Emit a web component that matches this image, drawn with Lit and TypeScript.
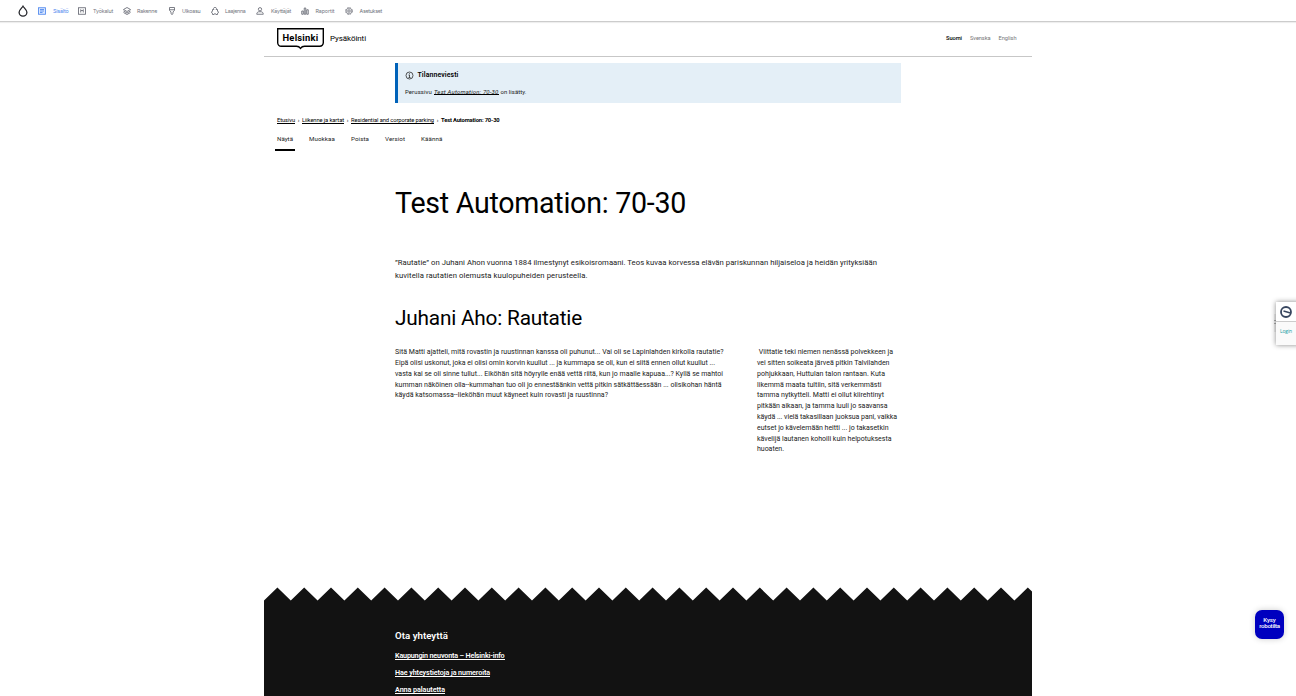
import { LitElement, html, svg, css } from "lit";
import { customElement, property } from "lit/decorators.js";

/** A single line of text tracked so that it fills exactly `w` pixels. */
@customElement("fit-text")
class FitText extends LitElement {
  @property({ type: Number }) w = 0;
  @property() text = "";
  static styles = css`
    :host { display: inline-block; white-space: pre; vertical-align: top; }
    span { display: inline-block; text-decoration: inherit; }
  `;
  render() {
    return html`<span>${this.text}</span>`;
  }
  updated() {
    const s = this.renderRoot.querySelector("span") as HTMLElement;
    s.style.letterSpacing = "0";
    const natural = s.getBoundingClientRect().width;
    s.style.letterSpacing = `${(this.w - natural) / this.text.length}px`;
    this.style.width = `${this.w}px`;
  }
}

const fit = (text: string, w: number) => html`<fit-text .text=${text} .w=${w}></fit-text>`;

const tools = [
  { label: "Sisältö", w: 15.5, item: 40, pad: 15, icon: svg`<rect x="1" y="1.500" width="14" height="13" fill="#dbe8ff"/><path d="M4 5h8M4 8h8M4 11h5"/>` },
  { label: "Työkalut", w: 20, item: 45, pad: 15, icon: svg`<rect x="1" y="1.500" width="14" height="13"/><path d="M5.500 5v6M10.500 5v6M5.500 5.500L8 8l2.500-2.500"/>` },
  { label: "Rakenne", w: 20, item: 45, pad: 14, icon: svg`<path d="M8 1l7 4-7 4-7-4zM1 8l7 4 7-4M1 11l7 4 7-4"/>` },
  { label: "Ulkoasu", w: 18.5, item: 43, pad: 14, icon: svg`<path d="M3 1h10v5.500L10 10v3.500l-2 1.500-2-1.500V10L3 6.500zM3 5.500h10"/>` },
  { label: "Laajenna", w: 20.5, item: 45, pad: 14, icon: svg`<path d="M3 5h2.800a2.800 2.800 0 114.400 0H13v3.500a2 2 0 010 4V15H9.800a1.800 1.800 0 00-3.600 0H3v-2.500a2 2 0 010-4z"/>` },
  { label: "Käyttäjät", w: 20, item: 45, pad: 15, icon: svg`<circle cx="8" cy="4.500" r="3.300"/><path d="M1.500 14.500c0-3 2-5 4-5h5c2 0 4 2 4 5z"/>` },
  { label: "Raportit", w: 19, item: 44, pad: 14.5, icon: svg`<path d="M1.500 8h3v6.500h-3zM6.500 2h3v12.500h-3zM11.500 5.500h3v9h-3z"/>` },
  { label: "Asetukset", w: 22.5, item: 44, pad: 14.5, icon: svg`<circle cx="8" cy="8" r="6.600" stroke-dasharray="3.700 1.500"/><circle cx="8" cy="8" r="5.500" stroke-width="1"/><circle cx="8" cy="8" r="2.500"/>` },
];

const left: [string, number][] = [
  ["Sitä Matti ajatteli, mitä rovastin ja ruustinnan kanssa oli puhunut... Vai oli se Lapinlahden kirkolla rautatie?", 328.5],
  ["Eipä olisi uskonut, joka ei olisi omin korvin kuullut ... ja kummapa se oli, kun ei siitä ennen ollut kuullut ...", 320],
  ["vasta kai se oli sinne tullut... Eiköhän sitä höyrylle enää vettä riitä, kun jo maalle kapuaa...? Kyllä se mahtoi", 328],
  ["kumman näköinen olla--kummahan tuo oli jo ennestäänkin vettä pitkin sätkättäessään ... olisikohan häntä", 326.5],
  ["käydä katsomassa--lieköhän muut käyneet kuin rovasti ja ruustinna?", 213],
];

const right: [string, number][] = [
  [" Viittatie teki niemen nenässä polvekkeen ja", 136],
  ["vei sitten soikeata järveä pitkin Talvilahden", 132.5],
  ["pohjukkaan, Huttulan talon rantaan. Kuta", 128],
  ["likemmä maata tultiin, sitä verkemmästi", 124.5],
  ["tamma nytkytteli. Matti ei ollut kiirehtinyt", 127],
  ["pitkään aikaan, ja tamma luuli jo saavansa", 130.5],
  ["käydä ... vielä takasillaan juoksua pani, vaikka", 140],
  ["eutset jo kävelemään heitti ... jo takasetkin", 131.5],
  ["kävelijä lautanen kohoili kuin helpotuksesta", 134.5],
  ["huoaten.", 27],
];

const footerLinks: [string, number][] = [
  ["Kaupungin neuvonta – Helsinki-info", 109.5],
  ["Hae yhteystietoja ja numeroita", 95],
  ["Anna palautetta", 50],
];

const zigzag = () => {
  const step = 26.8;
  let d = "M0 14";
  for (let x = 0; x < 800; x += step) d += `L${x} 13.500L${x + step / 2} 0.500`;
  return d + "L800 14z";
};

@customElement("app-root")
class AppRoot extends LitElement {
  static styles = css`
    :host {
      display: block; position: relative; width: 1296px; height: 696px; overflow: hidden;
      background: #fff; color: #000; font-family: Roboto, "Liberation Sans", sans-serif;
    }
    * { box-sizing: border-box; }
    h1, h2, h3, p { margin: 0; font-weight: 400; }
    .toolbar {
      display: flex; height: 22px; padding: 0 0 0 18px; align-items: center;
      border-bottom: 1px solid #ccc; box-shadow: 0 1px 1px #0001; font: 5.3px/22px Inter, sans-serif; color: #73757e;
    }
    .drop { width: 20px; height: 12px; flex: none; }
    .drop svg { display: block; width: 10px; height: 12px; }
    .tool { display: flex; align-items: center; flex: none; height: 22px; }
    .tool svg { width: 8px; height: 8px; fill: none; stroke: #666872; stroke-width: 1.7; }
    .tool.on { color: #4d86ee; }
    .tool.on svg { stroke: #4d86ee; }
    .iconbox { display: flex; flex: none; }
    .page { width: 768px; margin: 0 auto; }
    header { display: flex; height: 35px; border-bottom: 1px solid #c7c7c7; padding: 5px 15.5px 0 12px; }
    .logo { position: relative; width: 49px; height: 24px; flex: none; }
    .logo svg { position: absolute; inset: 0; }
    .logo b { position: absolute; left: 6.5px; top: 5px; font-size: 9.4px; line-height: 12px; font-weight: 700; }
    .site { padding-left: 5px; font-size: 8px; line-height: 23px; flex: 1; }
    .langs { display: flex; gap: 8px; font-size: 5.7px; line-height: 22px; color: #777; }
    .langs .cur { color: #000; font-weight: 500; }
    .notice { width: 506px; height: 40px; margin: 6px 0 0 131px; background: #e4eff7; border-left: 3px solid #0062b9; padding: 6px 0 0 7px; }
    .ntitle { display: flex; align-items: center; gap: 3.5px; height: 12px; font-size: 6.9px; line-height: 12px; font-weight: 600; }
    .ntitle svg { width: 9px; height: 9px; }
    .nbody { display: flex; gap: 2px; margin-top: 5px; font-size: 6px; line-height: 11px; color: #222; }
    .nbody i { border-bottom: 1px solid #000; height: 9px; }
    .crumbs { display: flex; margin: 12px 0 0 13px; font-size: 5.8px; line-height: 10px; height: 10px; }
    .crumbs a { border-bottom: 1px solid #000; height: 9px; }
    .crumbs em { width: 7px; text-align: center; font-style: normal; }
    .crumbs b { font-weight: 700; }
    .tabs { display: flex; margin: 9px 0 0 11px; font-size: 6.2px; line-height: 10px; height: 17px; color: #222; }
    .tab { padding: 0 2px; height: 17px; }
    .tab.gap { margin-left: 12px; }
    .tab.on { border-bottom: 2px solid #000; }
    .content { margin-left: 131px; width: 506px; }
    h1 { padding-top: 34px; font-size: 28.6px; line-height: 37px; height: 105px; }
    .lead { font-size: 7.7px; line-height: 13px; height: 26px; color: #1a1a1a; }
    .lead fit-text, .cols fit-text { display: block; }
    h2 { margin-top: 23px; font-size: 20.8px; line-height: 26px; height: 42.2px; }
    .cols { display: grid; grid-template-columns: 362px 1fr; font-size: 7px; line-height: 10.8px; height: 239.8px; color: #1a1a1a; }
    .zig { display: block; width: 768px; height: 14px; }
    footer { background: #121212; color: #fff; height: 96px; padding: 27px 0 0 131px; display: flex; flex-direction: column; align-items: flex-start; }
    footer h3 { font-size: 9.7px; line-height: 16px; font-weight: 600; margin-bottom: 7px; }
    footer a { font-size: 7.2px; line-height: 9px; height: 9px; margin-bottom: 8px; font-weight: 600; border-bottom: 1px solid #fff; }
    .login {
      position: absolute; left: 1276px; top: 302px; width: 24px; height: 43px; background: #fafafa;
      box-shadow: 0 0 5px #0007; font: 5px/18px "Open Sans", sans-serif; color: #169aa3;
    }
    .login .mark { height: 20px; border-bottom: 1px solid #ccc; padding: 4px 0 0 4px; background: #fff; }
    .login svg { display: block; }
    .login .label { padding-left: 4px; }
    .grip { position: absolute; left: 1274px; top: 314px; width: 2px; height: 18px; background: #eee; }
    .grip::after { content: ""; position: absolute; left: 0; top: 6px; width: 2px; height: 6px; background: repeating-linear-gradient(#aaa 0 1px, #eee 1px 3px); }
    .bot {
      position: absolute; left: 1255px; top: 610px; width: 29px; height: 29px; border-radius: 7px; background: #0000bf;
      box-shadow: 0 0 6px #0003; color: #fff; font-size: 6.1px; line-height: 6px; font-weight: 500;
      display: flex; flex-direction: column; align-items: center; padding-top: 7px;
    }
  `;

  render() {
    return html`
      <nav class="toolbar">
        <div class="drop"><svg viewBox="0 0 10 12"><path d="M5 1.200C4 3 1.100 5 1.100 7.300a3.900 3.900 0 007.800 0C8.900 5 6 3 5 1.200z" fill="none" stroke="#232429" stroke-width="1.300"/></svg></div>
        ${tools.map((t, i) => html`<div class="tool ${i ? "" : "on"}" style="width:${t.item}px">
          <span class="iconbox" style="width:${t.pad}px"><svg viewBox="0 0 16 16">${t.icon}</svg></span>${fit(t.label, t.w)}
        </div>`)}
      </nav>
      <div class="page">
        <header>
          <div class="logo">
            <svg width="49" height="24" viewBox="0 0 49 24"><path d="M1.700 1.700h45.600v14.100a3.500 3.500 0 01-3.500 3.500H28.500q-2.500 0-4 2-1.500-2-4-2H5.200a3.500 3.500 0 01-3.500-3.500z" fill="#fff" stroke="#000" stroke-width="1.400"/></svg>
            <b>${fit("Helsinki", 36)}</b>
          </div>
          <div class="site">${fit("Pysäköinti", 36)}</div>
          <div class="langs"><span class="cur">${fit("Suomi", 16)}</span>${fit("Svenska", 20.5)}${fit("English", 18)}</div>
        </header>
        <section class="notice">
          <div class="ntitle"><svg viewBox="0 0 18 18" fill="none" stroke="#222" stroke-width="1.500"><circle cx="9" cy="9" r="7"/><path d="M7 8h2v5M7 13h4M9 4.500v2"/></svg>${fit("Tilanneviesti", 41)}</div>
          <div class="nbody">${fit("Perussivu", 27)}<i>${fit("Test Automation: 70-30", 64.5)}</i>${fit("on lisätty.", 26)}</div>
        </section>
        <nav class="crumbs">
          <a>${fit("Etusivu", 18)}</a><em>›</em><a>${fit("Liikenne ja kartat", 42)}</a><em>›</em><a>${fit("Residential and corporate parking", 83)}</a><em>›</em><b>${fit("Test Automation: 70-30", 58.5)}</b>
        </nav>
        <nav class="tabs">
          <div class="tab on">${fit("Näytä", 16)}</div>
          <div class="tab gap">${fit("Muokkaa", 26)}</div>
          <div class="tab gap">${fit("Poista", 18)}</div>
          <div class="tab gap">${fit("Versiot", 20)}</div>
          <div class="tab gap">${fit("Käännä", 21.5)}</div>
        </nav>
        <main class="content">
          <h1>${fit("Test Automation: 70-30", 291)}</h1>
          <p class="lead">
            ${fit("”Rautatie” on Juhani Ahon vuonna 1884 ilmestynyt esikoisromaani. Teos kuvaa korvessa elävän pariskunnan hiljaiseloa ja heidän yrityksiään", 482)}
            ${fit("kuvitella rautatien olemusta kuulopuheiden perusteella.", 192.5)}
          </p>
          <h2>${fit("Juhani Aho: Rautatie", 187)}</h2>
          <div class="cols">
            <div>${left.map(([t, w]) => fit(t, w))}</div>
            <div>${right.map(([t, w]) => fit(t, w))}</div>
          </div>
        </main>
        <svg class="zig" viewBox="0 0 768 14"><path d=${zigzag()} fill="#121212"/></svg>
        <footer>
          <h3>${fit("Ota yhteyttä", 53)}</h3>
          ${footerLinks.map(([t, w]) => html`<a>${fit(t, w)}</a>`)}
        </footer>
      </div>
      <div class="grip"></div>
      <aside class="login">
        <div class="mark"><svg width="12" height="12" viewBox="0 0 12 12" fill="none" stroke="#38465f" stroke-width="1.800"><circle cx="6" cy="6" r="5"/><path d="M3.500 5L10.500 7" stroke-width="1.500"/></svg></div>
        <div class="label">${fit("Login", 12)}</div>
      </aside>
      <div class="bot">${fit("Kysy", 12.5)}${fit("robotilta", 20.5)}</div>
    `;
  }
}
